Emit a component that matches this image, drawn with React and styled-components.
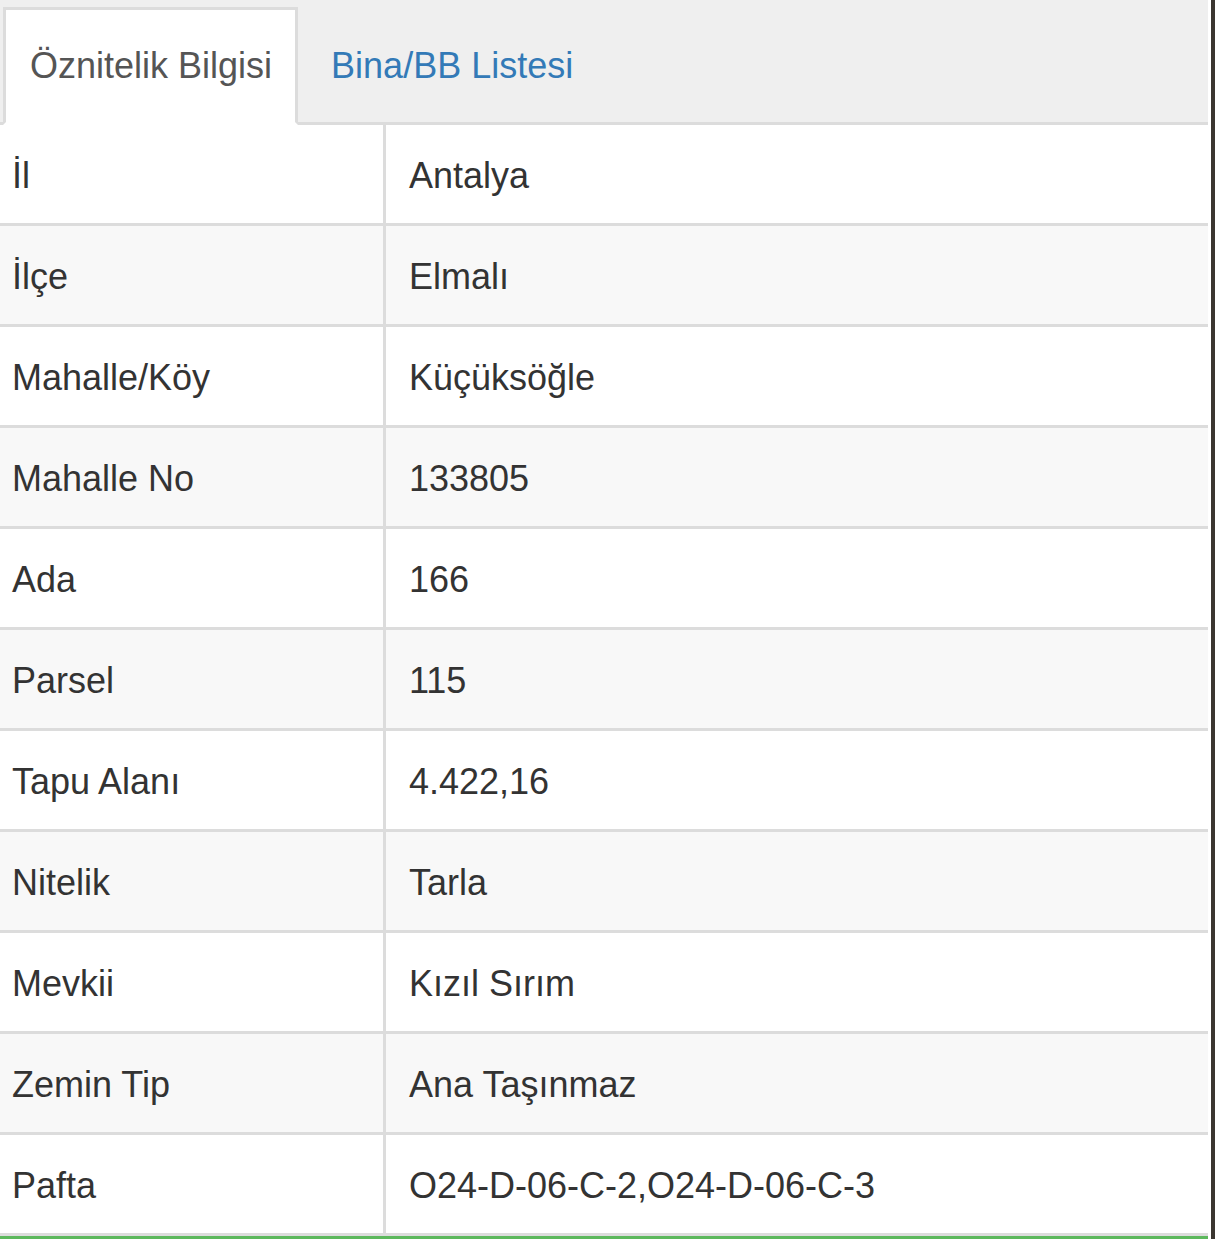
import React from 'react';
import styled, { createGlobalStyle } from 'styled-components';

const GlobalStyle = createGlobalStyle`
  html, body {
    margin: 0;
    padding: 0;
    background: #fff;
    overflow: hidden;
  }
  body {
    font-family: "Liberation Sans", Arial, Helvetica, sans-serif;
  }
`;

const Page = styled.div`
  display: flex;
  width: 1215px;
  height: 1239px;
`;

const Panel = styled.div`
  flex: 1;
  display: flex;
  flex-direction: column;
  padding-right: 3px;
  background: #fff;
`;

const ScrollEdge = styled.div`
  width: 4px;
  background: #3b3631;
`;

const TabBar = styled.ul`
  display: flex;
  align-items: flex-end;
  height: 125px;
  box-sizing: border-box;
  margin: 0;
  padding: 0 0 0 3px;
  list-style: none;
  background: #efefef;
  border-bottom: 3px solid #dcdcdc;
`;

const Tab = styled.li`
  box-sizing: border-box;
  height: 118px;
  margin-bottom: -3px;
  margin-right: 6px;
  padding: 0 23px 0 24px;
  display: flex;
  align-items: center;
  font-size: 36px;
  border: 3px solid ${p => (p.$active ? '#dcdcdc' : 'transparent')};
  border-bottom-color: transparent;
  background: ${p => (p.$active ? '#fff' : 'transparent')};
  color: ${p => (p.$active ? '#555' : '#337ab7')};
`;

const Table = styled.div`
  display: flex;
  flex-direction: column;
  border-bottom: 3px solid #5cb85c;
`;

const Row = styled.div`
  display: grid;
  grid-template-columns: 386px 1fr;
  height: 101px;
  box-sizing: border-box;
  border-bottom: 3px solid #dcdcdc;
  background: ${p => (p.$striped ? '#f8f8f8' : '#fff')};
`;

const Cell = styled.div`
  display: flex;
  align-items: center;
  padding-top: 4px;
  padding-left: ${p => (p.$label ? '12px' : '23px')};
  font-size: 36px;
  color: #333;
  border-right: ${p => (p.$label ? '3px solid #dcdcdc' : 'none')};
`;

const rows = [
  ['İl', 'Antalya'],
  ['İlçe', 'Elmalı'],
  ['Mahalle/Köy', 'Küçüksöğle'],
  ['Mahalle No', '133805'],
  ['Ada', '166'],
  ['Parsel', '115'],
  ['Tapu Alanı', '4.422,16'],
  ['Nitelik', 'Tarla'],
  ['Mevkii', 'Kızıl Sırım'],
  ['Zemin Tip', 'Ana Taşınmaz'],
  ['Pafta', 'O24-D-06-C-2,O24-D-06-C-3'],
];

const App = () => {
  return (
    <Page>
      <GlobalStyle />
      <Panel>
        <TabBar>
          <Tab $active>Öznitelik Bilgisi</Tab>
          <Tab>Bina/BB Listesi</Tab>
        </TabBar>
        <Table>
          {rows.map(([label, value], i) => (
            <Row key={label} $striped={i % 2 === 1}>
              <Cell $label>{label}</Cell>
              <Cell>{value}</Cell>
            </Row>
          ))}
        </Table>
      </Panel>
      <ScrollEdge />
    </Page>
  );
};

export default App;
